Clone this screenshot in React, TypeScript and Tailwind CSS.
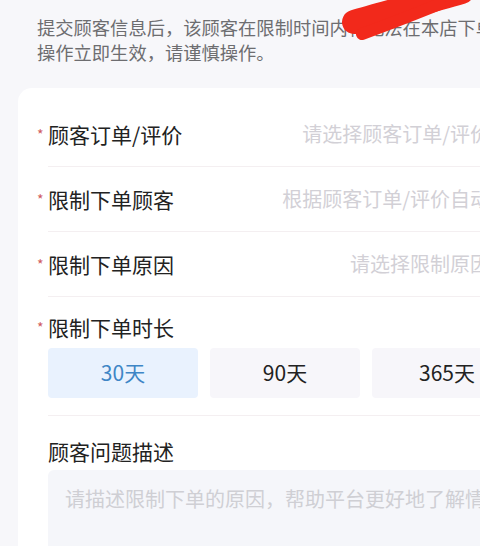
import React from "react";

const font = { fontFamily: '"Noto Sans CJK SC", "Noto Sans", sans-serif' };

function Star() {
  return (
    <span className="absolute left-[-11px] top-[8px] text-[14px] leading-[14px] text-[#cf5a60]">*</span>
  );
}

function SelectRow({ label, placeholder }: { label: string; placeholder: string }) {
  return (
    <div className="flex h-[65px] items-center justify-between border-b border-[#f4eff1]">
      <div className="relative text-[21px] leading-[30px] text-[#222]">
        <Star />
        {label}
      </div>
      <div className="whitespace-nowrap pr-[32px] text-[20px] leading-[30px] text-[#d2d0d6]">{placeholder}</div>
    </div>
  );
}

export default function App() {
  return (
    <div className="relative h-[546px] w-[480px] overflow-hidden bg-[#f7f7fa]" style={font}>
      <div className="w-[600px] pl-[37px] pt-[15px] text-[18.3px] leading-[25px] text-[#6d6d70]">
        <div className="whitespace-nowrap">提交顾客信息后，该顾客在限制时间内将无法在本店下单，</div>
        <div className="whitespace-nowrap">操作立即生效，请谨慎操作。</div>
      </div>
      <svg className="absolute left-0 top-0" width="480" height="60" viewBox="0 0 480 60">
        <path d="M354 22 C 380 14, 420 4, 462 -8" stroke="#f2291b" strokeWidth="24" strokeLinecap="round" fill="none" />
        <path d="M362 34 C 385 26, 410 16, 440 4" stroke="#f2291b" strokeWidth="12" strokeLinecap="round" fill="none" />
      </svg>
      <div className="ml-[18px] mt-[23px] w-[560px] rounded-tl-[14px] bg-white pl-[30px] pt-[14px]">
        <div className="w-[474px]">
          <SelectRow label="顾客订单/评价" placeholder="请选择顾客订单/评价" />
          <SelectRow label="限制下单顾客" placeholder="根据顾客订单/评价自动" />
          <SelectRow label="限制下单原因" placeholder="请选择限制原因" />
          <div className="border-b border-[#f4eff1] pb-[17px] pt-[15px]">
            <div className="relative text-[21px] leading-[30px] text-[#222]">
              <Star />
              限制下单时长
            </div>
            <div className="mt-[6px] flex gap-[12px]">
              <div className="flex h-[50px] w-[150px] items-center justify-center rounded-[4px] bg-[#e9f2fe] text-[21px] text-[#3e86c6]">30天</div>
              <div className="flex h-[50px] w-[150px] items-center justify-center rounded-[4px] bg-[#f7f6fa] text-[21px] text-[#222]">90天</div>
              <div className="flex h-[50px] w-[150px] items-center justify-center rounded-[4px] bg-[#f7f6fa] text-[21px] text-[#222]">365天</div>
            </div>
          </div>
          <div className="pt-[20px]">
            <div className="text-[21px] leading-[30px] text-[#222]">顾客问题描述</div>
            <div className="mt-[4px] h-[120px] rounded-[6px] bg-[#f5f6fa] pl-[17px] pt-[16px]">
              <div className="whitespace-nowrap text-[20px] leading-[26px] text-[#cfcfd4]">请描述限制下单的原因，帮助平台更好地了解情况</div>
            </div>
          </div>
        </div>
      </div>
    </div>
  );
}
